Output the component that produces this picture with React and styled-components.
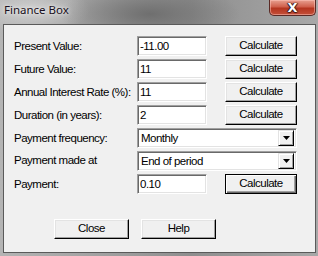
import React from "react";
import styled, { createGlobalStyle } from "styled-components";

const Global = createGlobalStyle`
  html, body { margin: 0; padding: 0; }
  body { width: 318px; height: 256px; overflow: hidden; background: #9a9a9a; }
  * { box-sizing: border-box; }
`;

const Win = styled.div`
  width: 318px;
  height: 256px;
  display: flex;
  flex-direction: column;
  background:
    radial-gradient(ellipse 90px 30px at 150px 14px, #6f6f6f 0%, rgba(111,111,111,0) 100%),
    radial-gradient(ellipse 60px 24px at 30px 10px, #cfcfcf 0%, rgba(207,207,207,0) 100%),
    linear-gradient(90deg, #b4b4b4 0%, #9c9c9c 40%, #8e8e8e 60%, #a8a8a8 100%);
  padding: 0 2px 3px 3px;
`;

const TitleBar = styled.div`
  height: 24px;
  flex: none;
  display: flex;
  align-items: flex-start;
  justify-content: space-between;
`;

const Title = styled.span`
  font-family: "Noto Sans", "Open Sans", sans-serif;
  font-size: 11.5px;
  color: #1a1020;
  margin: 2px 0 0 1px;
  text-shadow: 0 0 6px rgba(255,255,255,0.7), 0 0 3px rgba(255,255,255,0.7);
`;

const CloseX = styled.div`
  width: 47px;
  height: 16px;
  border: 1px solid #5a2a25;
  border-top: none;
  border-radius: 0 0 5px 5px;
  background: linear-gradient(180deg, #e8a090 0%, #d0604c 45%, #b4351f 55%, #c4503a 100%);
  box-shadow: inset 0 0 0 1px rgba(255,200,190,0.5);
  display: flex;
  align-items: center;
  justify-content: center;
  font-family: "DejaVu Sans", sans-serif;
  font-weight: bold;
  font-size: 13px;
  color: #ffffff;
  text-shadow: 0 0 1px #3a1a1a, 1px 0 1px #3a1a1a, -1px 0 1px #3a1a1a, 0 1px 1px #3a1a1a;
  line-height: 1;
`;

const Client = styled.div`
  flex: 1;
  background: #f0f0f0;
  border: 1px solid #5a5a5a;
  padding: 11px 0 0 10px;
  display: flex;
  flex-direction: column;
  font-family: "Liberation Sans", Arial, sans-serif;
  font-size: 11.5px;
  letter-spacing: -0.5px;
  color: #000;
`;

const Form = styled.div`
  display: grid;
  grid-template-columns: 123px 70px 18px 72px;
  grid-auto-rows: 20px;
  row-gap: 3px;
  align-items: center;
`;

const Label = styled.div`
  grid-column: 1;
  line-height: 20px;
  white-space: nowrap;
  margin-top: ${(p) => (p.$up ? "-3px" : "0")};
`;

const Edit = styled.div`
  grid-column: 2;
  height: 20px;
  background: #fff;
  border-top: 1px solid #a0a0a0;
  border-left: 1px solid #a0a0a0;
  border-right: 1px solid #ffffff;
  border-bottom: 1px solid #ffffff;
  box-shadow: inset 1px 1px 0 #696969, inset -1px -1px 0 #e3e3e3;
  padding: 0 0 0 2px;
  line-height: 19px;
  white-space: nowrap;
  overflow: hidden;
`;

const Btn = styled.div`
  grid-column: ${(p) => p.$col || "auto"};
  width: ${(p) => p.$w || 72}px;
  height: 20px;
  background: #f0f0f0;
  border-top: 1px solid ${(p) => (p.$def ? "#000" : "#ffffff")};
  border-left: 1px solid ${(p) => (p.$def ? "#000" : "#ffffff")};
  border-right: 1px solid #000000;
  border-bottom: 1px solid #000000;
  box-shadow: ${(p) =>
    p.$def
      ? "inset 1px 1px 0 #ffffff, inset -1px -1px 0 #696969, inset -2px -2px 0 #a0a0a0"
      : "inset -1px -1px 0 #a0a0a0, inset 1px 1px 0 #e3e3e3"};
  display: flex;
  align-items: center;
  justify-content: center;
  line-height: 1;
  padding-bottom: 1px;
`;

const Combo = styled.div`
  grid-column: 2 / 5;
  height: 20px;
  background: #fff;
  border-top: 1px solid #a0a0a0;
  border-left: 1px solid #a0a0a0;
  border-right: 1px solid #ffffff;
  border-bottom: 1px solid #ffffff;
  box-shadow: inset 1px 1px 0 #696969, inset -1px -1px 0 #e3e3e3;
  padding: 2px 2px 2px 3px;
  display: flex;
  align-items: center;
  justify-content: space-between;
`;

const ComboText = styled.span`
  line-height: 16px;
`;

const Arrow = styled.div`
  width: 16px;
  height: 16px;
  background: #f0f0f0;
  border-top: 1px solid #e3e3e3;
  border-left: 1px solid #e3e3e3;
  border-right: 1px solid #000;
  border-bottom: 1px solid #000;
  box-shadow: inset 1px 1px 0 #fff, inset -1px -1px 0 #a0a0a0;
  display: flex;
  align-items: center;
  justify-content: center;
`;

const Footer = styled.div`
  display: flex;
  gap: 12px;
  padding: 25px 0 0 40px;
`;

const rows = [
  { label: "Present Value:", value: "-11.00" },
  { label: "Future Value:", value: "11" },
  { label: "Annual Interest Rate (%):", value: "11" },
  { label: "Duration (in years):", value: "2" },
];

const DownArrow = () => (
  <Arrow>
    <svg width="7" height="4" viewBox="0 0 7 4"><path d="M0 0h7L3.5 4z" fill="#000" /></svg>
  </Arrow>
);

export default function App() {
  return (
    <>
      <Global />
      <Win>
        <TitleBar>
          <Title>Finance Box</Title>
          <CloseX>X</CloseX>
        </TitleBar>
        <Client>
          <Form>
            {rows.map((r) => (
              <React.Fragment key={r.label}>
                <Label>{r.label}</Label>
                <Edit>{r.value}</Edit>
                <Btn $col={4}>Calculate</Btn>
              </React.Fragment>
            ))}
            <Label>Payment frequency:</Label>
            <Combo>
              <ComboText>Monthly</ComboText>
              <DownArrow />
            </Combo>
            <Label $up>Payment made at</Label>
            <Combo>
              <ComboText>End of period</ComboText>
              <DownArrow />
            </Combo>
            <Label>Payment:</Label>
            <Edit>0.10</Edit>
            <Btn $col={4} $def>Calculate</Btn>
          </Form>
          <Footer>
            <Btn $w={75}>Close</Btn>
            <Btn $w={75}>Help</Btn>
          </Footer>
        </Client>
      </Win>
    </>
  );
}
